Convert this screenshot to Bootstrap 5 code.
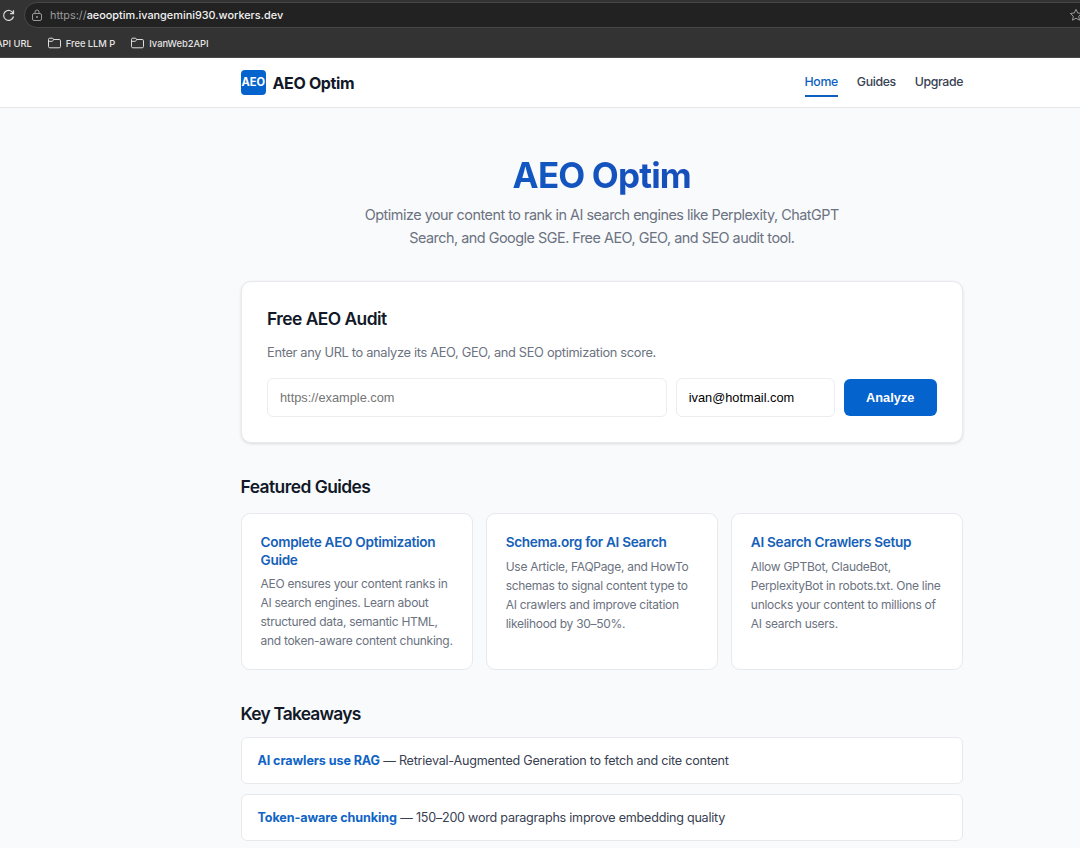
<!DOCTYPE html>
<html lang="en">
<head>
<meta charset="utf-8">
<meta name="viewport" content="width=device-width, initial-scale=1">
<title>AEO Optim</title>
<link rel="stylesheet" href="https://cdn.jsdelivr.net/npm/bootstrap@5.3.0/dist/css/bootstrap.min.css">
<style>
  body { font-family: Inter, "Liberation Sans", sans-serif; font-size: 12.8px; background: #f9fafc; color: #111827; height: 848px; overflow: hidden; }
  .wrap { width: 722.5px; margin-left: 240.5px; }
  .chrome { height: 58px; background: #333; color: #e4e4e4; border-bottom: 1px solid #484848; overflow: hidden; }
  .address-row { height: 29px; padding-top: 2px; }
  .reload { width: 13px; height: 13px; margin-left: 2px; }
  .address { height: 26px; margin-left: 9px; margin-right: -30px; background: #222; border: 1px solid #484848; border-radius: 13px; padding-left: 6px; font-size: 10.88px; color: #9a9a9a; }
  .address b { color: #f2f2f2; font-weight: 500; }
  .address .url { margin-left: 7px; padding-top: 1px; }
  .star { margin-right: 26px; }
  .bookmarks { height: 28px; font-size: 9.4px; font-weight: 500; letter-spacing: -.04px; }
  .bookmarks span { padding-top: 2px; }
  .bookmarks .first { margin-left: -4px; }
  .folder { margin-left: 16px; margin-right: 5px; }
  .site-header { height: 50px; background: #fff; border-bottom: 1px solid #e5e7eb; }
  .logo { width: 25.5px; height: 25.5px; border-radius: 4px; background: #0563cd; color: #fff; font-size: 11.1px; font-weight: 700; }
  .brand-name { font-size: 16px; font-weight: 700; letter-spacing: -.35px; margin-left: 6.5px; }
  .site-nav { gap: 19px; font-size: 12.3px; font-weight: 500; color: #374151; letter-spacing: -.37px; }
  .site-nav span { height: 31px; line-height: 31px; border-bottom: 2px solid transparent; margin-top: -2px; }
  .site-nav .current { color: #0f5fc0; border-color: #0f5fc0; }
  .hero { padding-top: 46px; height: 173px; }
  .hero h1 { font-size: 35px; font-weight: 700; line-height: 42px; letter-spacing: -.85px; margin: 0 0 7px; background: linear-gradient(135deg, #0a66cc, #1e40af); -webkit-background-clip: text; background-clip: text; color: transparent; }
  .hero p { font-size: 14.4px; line-height: 23px; color: #6b7280; letter-spacing: -.49px; }
  .panel { background: #fff; border: 1px solid #e7e9ed; }
  .audit { height: 162px; border-radius: 10px; padding: 25px 25.5px 0; box-shadow: 0 1px 3px rgba(0,0,0,.12); }
  h2 { font-size: 17.4px; font-weight: 600; line-height: 24px; letter-spacing: -.53px; margin: 0; }
  .audit p { color: #6b7280; margin: 12px 0 15px; line-height: 20px; letter-spacing: -.31px; }
  .audit input, .analyze { font-family: "Liberation Sans", sans-serif; font-size: 12.8px; border-radius: 6px; }
  .audit input { height: 39px; border: 1px solid #ebedf0; padding: 0 12px; color: #000; background: #fff; }
  .audit input::placeholder { color: #757575; opacity: 1; }
  .url-field { width: 399.5px; }
  .mail-field { width: 159px; }
  .analyze { width: 92.5px; height: 37px; border: 0; background: #0563cd; color: #fff; font-weight: 700; }
  .featured-title { margin-top: 32px; }
  .takeaways-title { margin: 32px 0 11px; letter-spacing: -.8px; }
  .guides { gap: 13px; margin-top: 14px; }
  .guide { width: 232.2px; height: 157px; border-radius: 9px; padding: 19px 19px 0; }
  .guide h3 { font-size: 13.6px; font-weight: 600; line-height: 17.6px; color: #1561b8; margin: 0 0 5px; letter-spacing: -.3px; padding-top: 1px; }
  .guide p { font-size: 12px; line-height: 19px; color: #6b7280; letter-spacing: -.28px; margin: 0; }
  .takeaway { height: 47px; border-radius: 6px; padding: 2px 0 0 16px; color: #374151; margin-bottom: 9.5px; font-size: 12.6px; letter-spacing: -.24px; }
  .takeaway b { color: #0f64c6; font-weight: 700; letter-spacing: -.1px; }
  .ln { white-space: nowrap; display: block; }
</style>
</head>
<body>
<div class="chrome">
  <div class="address-row d-flex">
    <svg class="reload align-self-center flex-shrink-0" viewBox="0 0 13 13" fill="none" stroke="#ddd" stroke-width="1.2"><path d="M11.1 4.2A5 5 0 1 0 11.5 7.5M11.5 1.2v3.4H8.1"/></svg>
    <div class="address d-flex align-items-center flex-grow-1">
      <svg width="12" height="13" viewBox="0 0 12 13" fill="none" stroke="#999"><rect x="1.5" y="4.5" width="9" height="7" rx="1.5"/><path d="M4 4.5V3a2 2 0 0 1 4 0v1.5"/><circle cx="6" cy="8" r=".6" fill="#999"/></svg>
      <span class="url">https://<b>aeooptim.ivangemini930.workers.dev</b></span>
      <svg class="star ms-auto" width="14" height="14" viewBox="0 0 14 14" fill="none" stroke="#999"><path d="m7 1.3 1.7 3.7 4 .5-3 2.7.8 4-3.5-2-3.5 2 .8-4-3-2.7 4-.5z"/></svg>
    </div>
  </div>
  <div class="bookmarks d-flex align-items-center">
    <span class="first">API URL</span>
    <svg class="folder" width="13" height="12" viewBox="0 0 13 12" fill="none" stroke="#ddd"><path d="M.5 9.5v-7a1.300 1.300 0 0 1 1.300-1.300h2.500L6 2.500h5.200a1.300 1.300 0 0 1 1.300 1.300v5.700a1.300 1.300 0 0 1-1.300 1.300H1.800A1.300 1.300 0 0 1 .5 9.500zM.5 4.300h3.700L6 2.500"/></svg>
    <span>Free LLM P</span>
    <svg class="folder" width="13" height="12" viewBox="0 0 13 12" fill="none" stroke="#ddd"><path d="M.5 9.5v-7a1.300 1.300 0 0 1 1.300-1.300h2.500L6 2.500h5.200a1.300 1.300 0 0 1 1.300 1.300v5.700a1.300 1.300 0 0 1-1.300 1.300H1.800A1.300 1.300 0 0 1 .5 9.500zM.5 4.300h3.700L6 2.500"/></svg>
    <span>IvanWeb2API</span>
  </div>
</div>
<header class="site-header">
  <div class="wrap h-100 d-flex align-items-center">
    <div class="logo d-flex align-items-center justify-content-center">AEO</div>
    <span class="brand-name">AEO Optim</span>
    <nav class="site-nav d-flex ms-auto"><span class="current">Home</span><span>Guides</span><span>Upgrade</span></nav>
  </div>
</header>
<main class="wrap">
  <section class="hero text-center">
    <h1>AEO Optim</h1>
    <p><span class="ln">Optimize your content to rank in AI search engines like Perplexity, ChatGPT</span><span class="ln">Search, and Google SGE. Free AEO, GEO, and SEO audit tool.</span></p>
  </section>
  <section class="panel audit">
    <h2>Free AEO Audit</h2>
    <p>Enter any URL to analyze its AEO, GEO, and SEO optimization score.</p>
    <form class="d-flex justify-content-between align-items-center">
      <input class="url-field" type="text" placeholder="https://example.com">
      <input class="mail-field" type="text" value="ivan@hotmail.com">
      <button class="analyze" type="button">Analyze</button>
    </form>
  </section>
  <h2 class="featured-title">Featured Guides</h2>
  <section class="guides d-flex">
    <article class="panel guide"><h3>Complete AEO Optimization<br>Guide</h3><p><span class="ln">AEO ensures your content ranks in</span><span class="ln">AI search engines. Learn about</span><span class="ln">structured data, semantic HTML,</span><span class="ln">and token-aware content chunking.</span></p></article>
    <article class="panel guide"><h3>Schema.org for AI Search</h3><p><span class="ln">Use Article, FAQPage, and HowTo</span><span class="ln">schemas to signal content type to</span><span class="ln">AI crawlers and improve citation</span><span class="ln">likelihood by 30–50%.</span></p></article>
    <article class="panel guide"><h3>AI Search Crawlers Setup</h3><p><span class="ln">Allow GPTBot, ClaudeBot,</span><span class="ln">PerplexityBot in robots.txt. One line</span><span class="ln">unlocks your content to millions of</span><span class="ln">AI search users.</span></p></article>
  </section>
  <h2 class="takeaways-title">Key Takeaways</h2>
  <div class="panel takeaway d-flex align-items-center"><span><b>AI crawlers use RAG</b> — Retrieval-Augmented Generation to fetch and cite content</span></div>
  <div class="panel takeaway d-flex align-items-center"><span><b>Token-aware chunking</b> — 150–200 word paragraphs improve embedding quality</span></div>
</main>
<script src="https://cdn.jsdelivr.net/npm/bootstrap@5.3.0/dist/js/bootstrap.bundle.min.js"></script>
</body>
</html>
